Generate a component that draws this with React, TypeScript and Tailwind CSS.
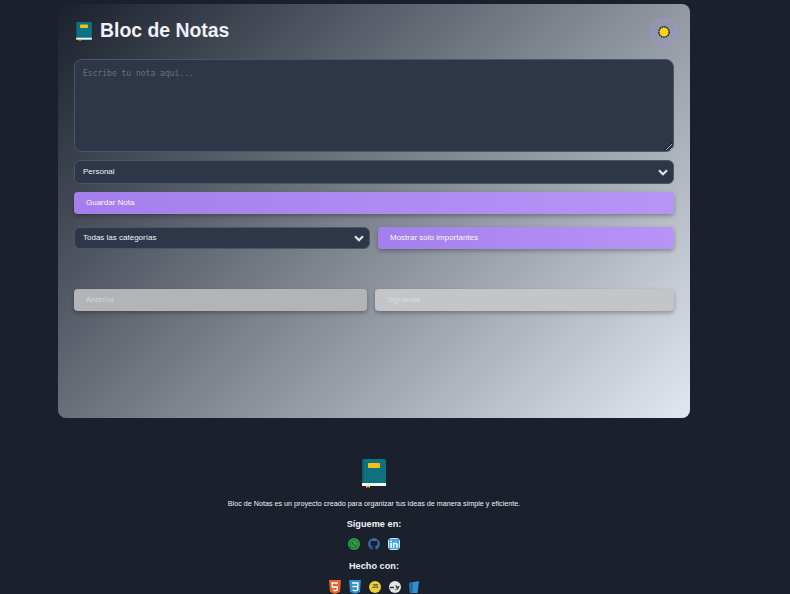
import { FaGithub, FaLinkedin, FaWhatsapp } from 'react-icons/fa';

function BookIcon({ className }: { className: string }) {
	return (
		<svg viewBox="0 0 24 29" className={className}>
			<rect x="0" y="0" width="24" height="26" rx="2" fill="#0e7281" />
			<rect x="0" y="1" width="1.5" height="24" fill="#0b5c68" />
			<rect x="6" y="4" width="12" height="5" rx="1" fill="#f5c211" />
			<rect x="0" y="24" width="24" height="3" fill="#f4f7f8" />
			<path d="M4 27h4v2l-2-1-2 1z" fill="#f5b301" />
		</svg>
	);
}

function Chevron() {
	return (
		<svg viewBox="0 0 12 8" className="h-[7px] w-[10px]" fill="none" stroke="#e5e7eb" strokeWidth="2.6">
			<path d="M1.2 1.4 6 6l4.8-4.6" />
		</svg>
	);
}

function SunIcon() {
	return (
		<svg viewBox="0 0 12 12" className="h-3 w-3">
			<circle cx="6" cy="6" r="5.2" fill="none" stroke="#2e2a1c" strokeWidth="1.5" strokeDasharray="1.6 0.8" />
			<circle cx="6" cy="6" r="4.2" fill="#ffd60a" />
		</svg>
	);
}

function WhatsappIcon() {
	return (
		<span className="flex h-3 w-3 items-center justify-center rounded-full bg-[#2f9e44]">
			<FaWhatsapp className="h-[10px] w-[10px] text-[#1c5f34]" />
		</span>
	);
}

function Html5Icon() {
	return (
		<svg viewBox="0 0 12 14" className="h-[14px] w-3">
			<path d="M0 0h12l-1 12-5 2-5-2z" fill="#e8622a" />
			<path d="M9 3H3l.3 4h5l-.2 3L6 10.8 4 10" fill="none" stroke="#fff" strokeWidth="1.3" />
		</svg>
	);
}

function Css3Icon() {
	return (
		<svg viewBox="0 0 12 14" className="h-[14px] w-3">
			<path d="M0 0h12l-1 12-5 2-5-2z" fill="#2f8fd0" />
			<path d="M3 3h6L8.700 10 6 10.800 3.600 10M3.400 6.500h5.200" fill="none" stroke="#fff" strokeWidth="1.3" />
		</svg>
	);
}

function JsIcon() {
	return (
		<span className="flex h-3 w-3 items-center justify-center rounded-full bg-[#e8cf3a] text-[5px] font-bold text-[#3a3a20]">
			JS
		</span>
	);
}

function ExpressIcon() {
	return (
		<svg viewBox="0 0 12 12" className="h-3 w-3">
			<circle cx="6" cy="6" r="6" fill="#e4e4e4" />
			<path d="M1 6.500h4M7 4.500l1.500 3L10 5" fill="none" stroke="#333" strokeWidth="1.4" />
			<path d="M6 9l1.500-1" stroke="#4c9a52" strokeWidth="1.4" />
		</svg>
	);
}

function SlantIcon() {
	return (
		<svg viewBox="0 0 10 12" className="h-3 w-[10px]">
			<path d="M0 2 10 0 8.500 12H1z" fill="#2f8fd0" />
			<path d="M0 2 4 1.200V11.600H1z" fill="#1f6ea8" />
		</svg>
	);
}

function FakeSelect({ label, className }: { label: string; className: string }) {
	return (
		<div
			className={`flex items-center justify-between rounded-md border border-[#4a5568] bg-[#2d3748] pl-2 pr-[5px] text-[8px] text-[#edf2f7] ${className}`}
		>
			<span>{label}</span>
			<Chevron />
		</div>
	);
}

export default function App() {
	return (
		<div className="h-[594px] overflow-hidden bg-[#1a202c] font-['Liberation_Sans',sans-serif]">
			<div className="w-[748px]">
				<main className="ml-[58px] mr-[58px] mt-1 h-[414px] rounded-lg bg-[linear-gradient(135deg,#1a202c,#e2e8f0)] px-4 pt-[15px]">
					<header className="flex h-[26px] items-center justify-between">
						<h1 className="ml-[2px] flex items-center gap-2 pb-[2px] text-[19.4px] font-bold text-[#edf2f7]">
							<BookIcon className="h-[19px] w-4" />
							Bloc de Notas
						</h1>
						<button
							type="button"
							className="mr-[-3px] flex h-[26px] w-[26px] items-center justify-center rounded-full border-[1.5px] border-[#a78bfa]"
						>
							<SunIcon />
						</button>
					</header>

					<textarea
						readOnly
						placeholder="Escribe tu nota aquí..."
						className="mt-[14px] block h-[93px] w-full rounded-lg border border-[#4a5568] bg-[#2d3748] px-2 py-2 font-['DejaVu_Sans_Mono',monospace] text-[8px] text-[#edf2f7] outline-none placeholder:text-[#6b7280]"
					/>

					<FakeSelect label="Personal" className="mt-2 h-6" />

					<button
						type="button"
						className="mt-2 block h-[22px] w-full rounded bg-[linear-gradient(90deg,#a47fec,#b794f6)] pb-px pl-3 text-left text-[8px] text-[#f7fafc] shadow-[0_2px_4px_rgba(0,0,0,0.3)]"
					>
						Guardar Nota
					</button>

					<div className="mt-[13px] flex gap-2">
						<FakeSelect label="Todas las categorías" className="h-[22px] w-[296px]" />
						<button
							type="button"
							className="h-[22px] flex-1 rounded bg-[linear-gradient(90deg,#a47fec,#b794f6)] pb-px pl-3 text-left text-[8px] text-[#f7fafc] shadow-[0_2px_4px_rgba(0,0,0,0.3)]"
						>
							Mostrar solo importantes
						</button>
					</div>

					<div className="mt-10 flex gap-2">
						<button
							type="button"
							className="h-[22px] w-[293px] rounded bg-[#b3b4b7] pl-3 text-left text-[8px] text-[#d4d5d8] shadow-[0_2px_4px_rgba(0,0,0,0.3)]"
						>
							Anterior
						</button>
						<button
							type="button"
							className="h-[22px] flex-1 rounded bg-[#c4c5c8] pl-3 text-left text-[8px] text-[#dcdde0] shadow-[0_2px_4px_rgba(0,0,0,0.3)]"
						>
							Siguiente
						</button>
					</div>
				</main>

				<footer className="mt-[41px] flex flex-col items-center text-[#edf2f7]">
					<BookIcon className="h-[29px] w-6" />
					<p className="mt-[10px] text-[7.2px] leading-3">
						Bloc de Notas es un proyecto creado para organizar tus ideas de manera simple y eficiente.
					</p>
					<h2 className="mt-2 text-[9.2px] font-bold leading-3">Sígueme en:</h2>
					<div className="mt-2 flex items-center gap-2 text-[12px]">
						<WhatsappIcon />
						<FaGithub className="text-[#3f6cb0]" />
						<FaLinkedin className="rounded-sm bg-white text-[#38a9e4]" />
					</div>
					<h2 className="mt-[10px] text-[9.2px] font-bold leading-3">Hecho con:</h2>
					<div className="mt-2 flex items-center gap-2">
						<Html5Icon />
						<Css3Icon />
						<JsIcon />
						<ExpressIcon />
						<SlantIcon />
					</div>
				</footer>
			</div>
		</div>
	);
}
